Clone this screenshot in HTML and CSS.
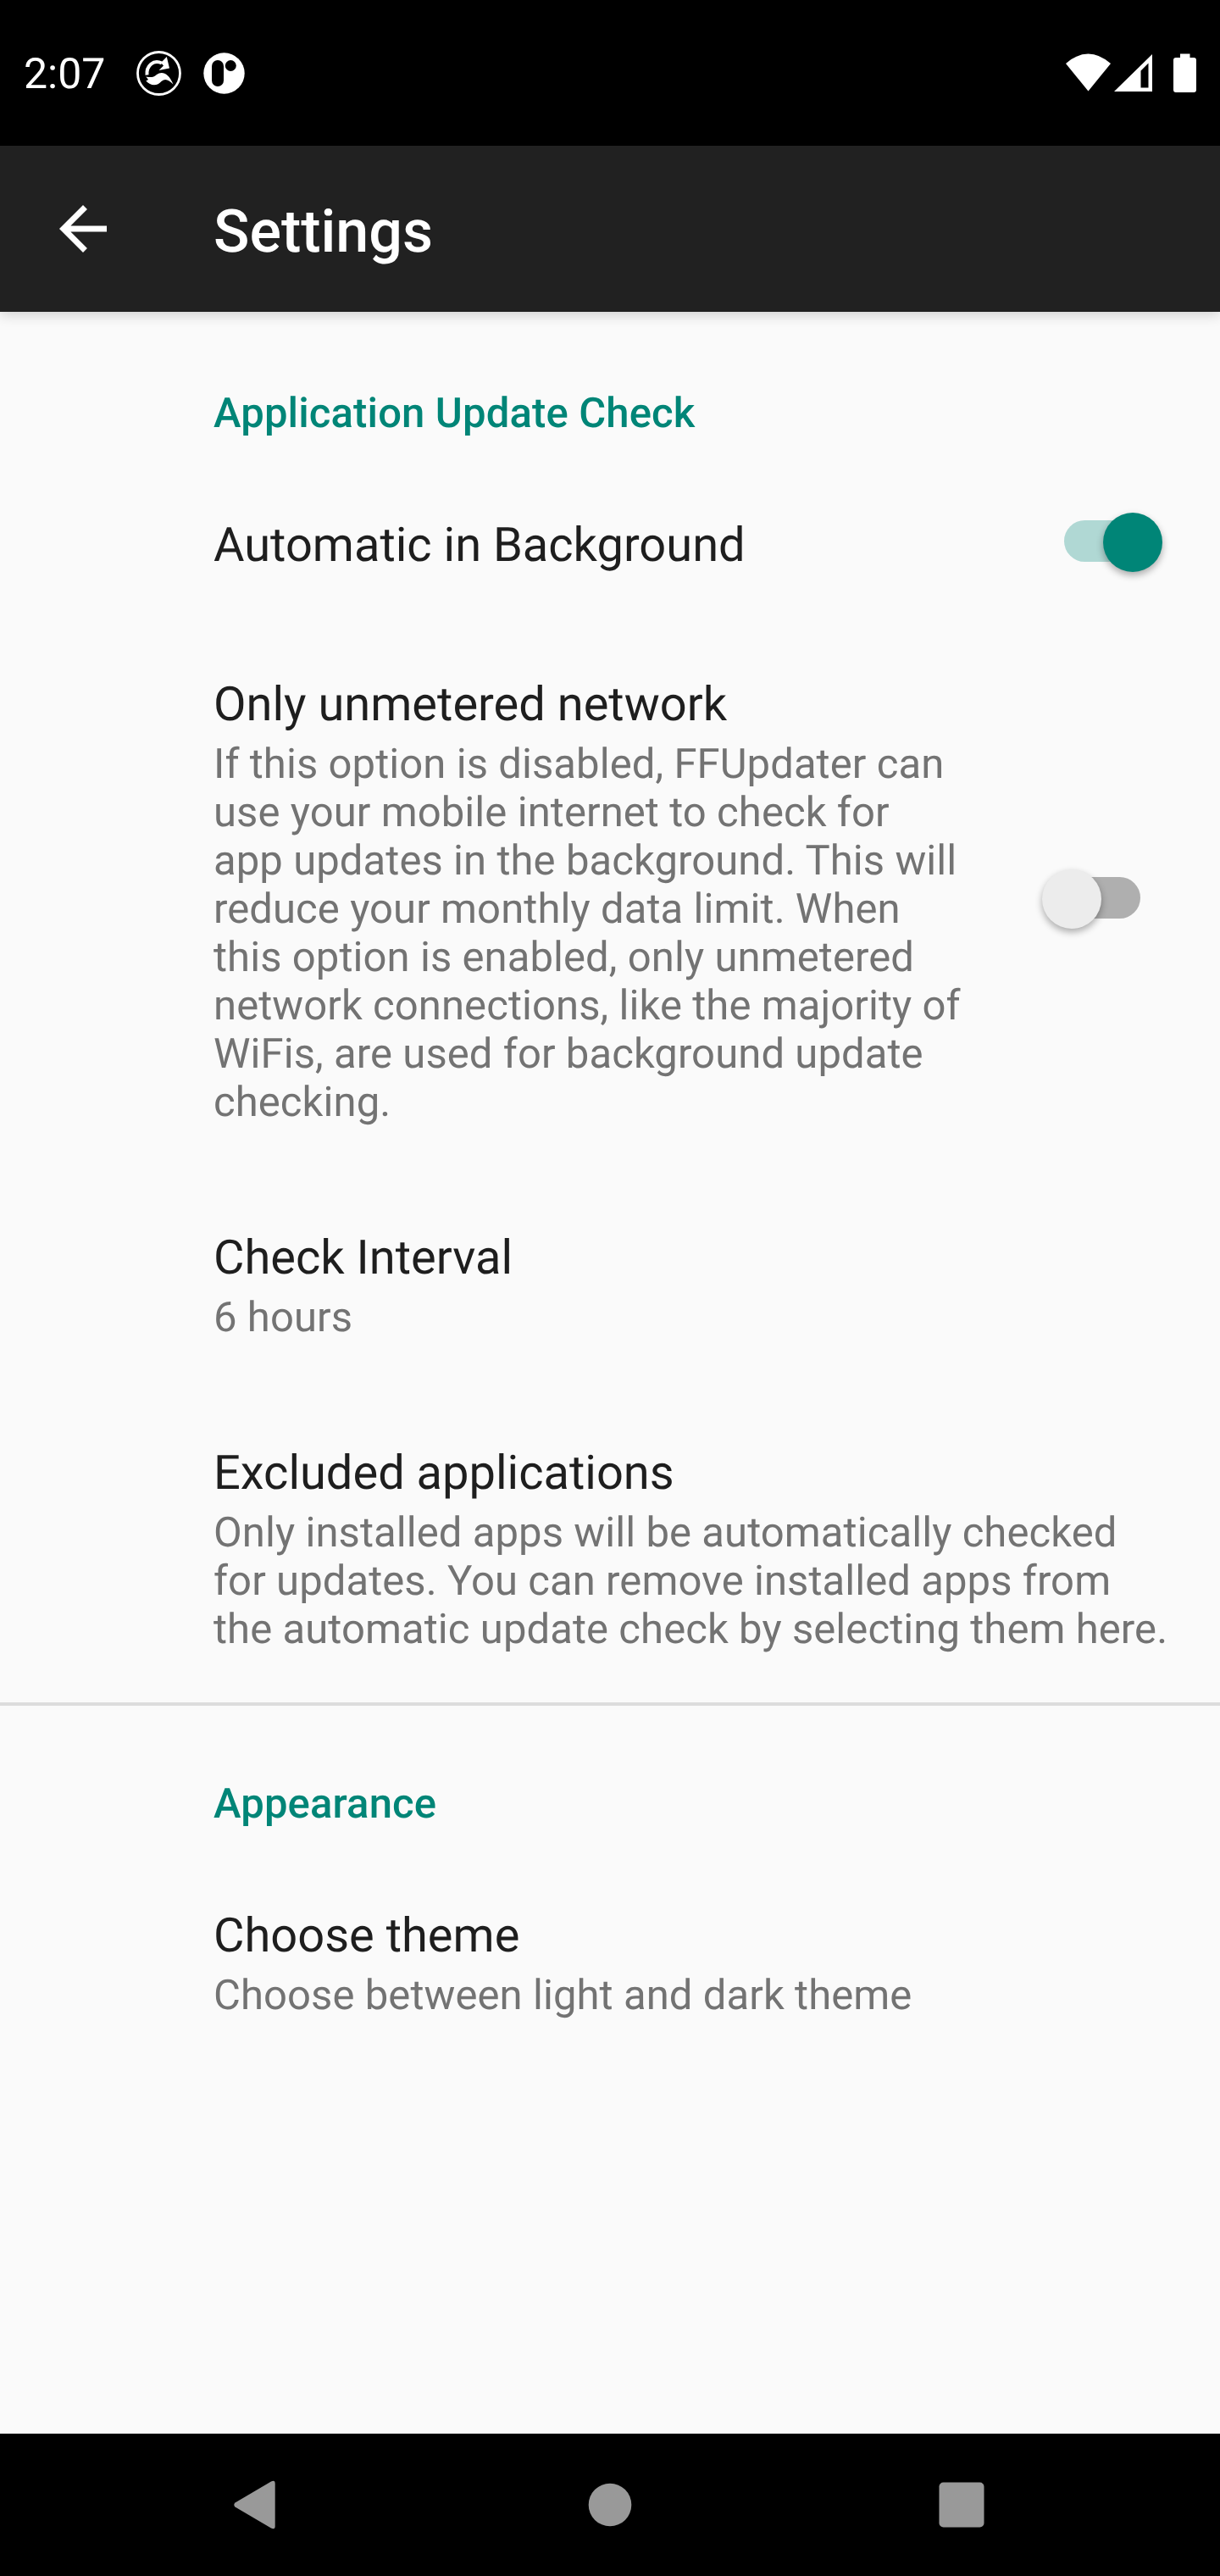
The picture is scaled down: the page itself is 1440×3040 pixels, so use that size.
FILE: index.html
```html
<!DOCTYPE html>
<html lang="en">
<head>
<meta charset="utf-8">
<title>Settings</title>
<link rel="stylesheet" href="styles.css">
</head>
<body>
<div class="screen">
  <header class="status">
    <span class="clock">2:07</span>
    <svg class="note-updater" viewBox="0 0 53 53">
      <circle cx="26.5" cy="26.5" r="25" fill="none" stroke="#fff" stroke-width="2.8"/>
      <path d="M12.5 28.500C11.500 18 20 9.500 30 14.500" fill="none" stroke="#fff" stroke-width="4"/>
      <path d="M35.800 7 39 20.500 26.500 23 32 17.500 29 14Z" fill="#fff"/>
      <path d="M11.300 30.500C17 31.500 20 31.500 24 28C30 23.500 38 26 43.500 39.500C38 34 34 32 29.500 36C25 41.500 17 42 11.300 35.500L14 34Z" fill="#fff"/>
    </svg>
    <svg class="note-app" viewBox="0 0 49 49">
      <circle cx="24.500" cy="24.500" r="24.200" fill="#fff"/>
      <rect x="10" y="9" width="14" height="31" rx="7" fill="#000"/>
      <circle cx="32.300" cy="15.500" r="6.500" fill="#000"/>
    </svg>
    <svg class="indicators" viewBox="0 0 156 48">
      <path d="M0 12Q26.500 -11 53 12L26.500 44.500Z" fill="#fff"/>
      <path fill-rule="evenodd" d="M102 1V45H57ZM97.500 11.500 88.500 20.500V40.500H97.500Z" fill="#fff"/>
      <path d="M135 .5H146.500V5H151Q154 5 154 8V43Q154 46 151 46H130Q127 46 127 43V8Q127 5 130 5H135Z" fill="#fff"/>
    </svg>
  </header>
  <div class="appbar">
    <svg class="back" viewBox="0 0 24 24"><path fill="#fff" d="M20 11H7.830l5.590-5.590L12 4l-8 8 8 8 1.410-1.410L7.830 13H20z"/></svg>
    <h1 class="heading">Settings</h1>
  </div>
  <main class="list">
    <h2 class="category">Application Update Check</h2>
    <div class="row row-single">
      <div class="title">Automatic in Background</div>
      <div class="switch on"><i class="track"></i><i class="thumb"></i></div>
    </div>
    <div class="row">
      <div class="copy">
        <div class="title">Only unmetered network</div>
        <div class="summary">If this option is disabled, FFUpdater can<br>use your mobile internet to check for<br>app updates in the background. This will<br>reduce your monthly data limit. When<br>this option is enabled, only unmetered<br>network connections, like the majority of<br>WiFis, are used for background update<br>checking.</div>
      </div>
      <div class="switch"><i class="track"></i><i class="thumb"></i></div>
    </div>
    <div class="row">
      <div class="copy">
        <div class="title">Check Interval</div>
        <div class="summary">6 hours</div>
      </div>
    </div>
    <div class="row">
      <div class="copy">
        <div class="title">Excluded applications</div>
        <div class="summary">Only installed apps will be automatically checked<br>for updates. You can remove installed apps from<br>the automatic update check by selecting them here.</div>
      </div>
    </div>
    <section class="group">
      <h2 class="category">Appearance</h2>
      <div class="row">
        <div class="copy">
          <div class="title">Choose theme</div>
          <div class="summary">Choose between light and dark theme</div>
        </div>
      </div>
    </section>
  </main>
  <nav class="navbar">
    <svg class="nav-icon" viewBox="0 0 60 60"><path d="M7.500 27.500 50 2.500Q54.700 0 54.700 5V55Q54.700 60 50 57.500L7.500 32.500Q5 30 7.500 27.500Z" fill="#999"/></svg>
    <svg class="nav-icon nav-home" viewBox="0 0 60 60"><circle cx="30" cy="30" r="25.300" fill="#999"/></svg>
    <svg class="nav-icon" viewBox="0 0 60 60"><rect x="3.500" y="3.500" width="53" height="53" rx="5" fill="#999"/></svg>
  </nav>
</div>
</body>
</html>
```
FILE: styles.css
```css
* { box-sizing: border-box; }
body { margin: 0; background: #000; font-family: Roboto, "Liberation Sans", sans-serif; text-rendering: geometricPrecision; }
h1, h2 { margin: 0; }
.screen { width: 1440px; height: 3040px; display: flex; flex-direction: column; background: #fafafa; overflow: hidden; white-space: nowrap; }
.status { height: 172px; flex: none; background: #000; color: #fff; display: flex; align-items: center; padding: 0 26px 0 28px; }
.clock { width: 133px; font-size: 50px; line-height: 58px; padding-top: 4px; }
.note-updater { width: 53px; height: 53px; }
.note-app { width: 49px; height: 49px; margin-left: 26px; }
.indicators { width: 156px; height: 48px; margin: 2px 0 0 auto; }
.appbar { height: 196px; flex: none; background: #212121; color: #fff; display: flex; align-items: center; padding-left: 56px; gap: 112px; box-shadow: 0 4px 14px rgba(0,0,0,.16); }
.back { width: 84px; height: 84px; }
.heading { font-size: 70px; line-height: 82px; font-weight: 500; padding-top: 8px; }
.list { flex: 1; }
.category { color: #008577; font-size: 49px; line-height: 57px; font-weight: 500; letter-spacing: .14px; padding: 91px 0 31px 252px; }
.row { display: flex; align-items: center; justify-content: space-between; padding: 56px 68px 56px 252px; }
.row-single { height: 188px; }
.title { color: #1e1e1e; font-size: 56px; line-height: 66px; padding: 7px 0 2px; }
.row-single .title { padding: 6px 0 3px; }
.summary { color: #737373; font-size: 49px; line-height: 57px; letter-spacing: .08px; padding: 7px 0 3px; }
.switch { width: 142px; height: 70px; flex: none; position: relative; margin-bottom: 2px; }
.track { position: absolute; left: 26px; top: 9px; width: 90px; height: 49px; border-radius: 25px; background: #afafaf; }
.thumb { position: absolute; left: 0; top: 0; width: 70px; height: 70px; border-radius: 50%; background: #ececec; box-shadow: 0 4px 8px rgba(0,0,0,.32); }
.on .track { background: #b0d8d4; }
.on .thumb { left: 72px; background: #008577; }
.group { margin-top: -1px; border-top: 4px solid #dcdcdc; }
.group .category { padding-top: 87px; }
.navbar { height: 168px; flex: none; background: #000; display: flex; align-items: center; padding-left: 270px; }
.nav-icon { width: 60px; height: 60px; }
.nav-home { margin: 0 355px 0 360px; }
```
